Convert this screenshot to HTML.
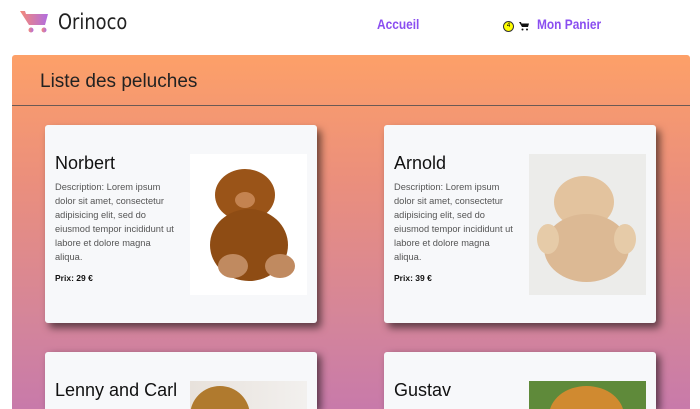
<!DOCTYPE html>
<html><head><meta charset="utf-8"><style>
*{margin:0;padding:0;box-sizing:border-box}
html,body{width:700px;height:409px;overflow:hidden}
body{background:#fff;font-family:"Liberation Sans",sans-serif;position:relative}
.abs{position:absolute}
.panel{left:12px;top:55px;width:678px;height:354px;border-radius:3px 3px 0 0;background:linear-gradient(#fda068 0%,#eb8f7c 35%,#d4859a 75%,#c87aaa 100%)}
.card{position:absolute;width:272px;height:198px;background:#f7f8fa;border-radius:3px;box-shadow:4px 5px 8px rgba(0,0,0,.55);overflow:hidden}
.card.s{height:57px;border-radius:3px 3px 0 0;box-shadow:4px 3px 8px rgba(0,0,0,.55)}
.card h2{position:absolute;left:10px;top:28px;font-size:18px;font-weight:normal;color:#111}
.card p{position:absolute;left:10px;top:55px;width:122px;font-size:9.3px;line-height:14px;color:#555}
.card b{position:absolute;left:10px;top:148px;font-size:8.5px;color:#111}
.img{position:absolute;left:145px;top:29px;width:117px;height:141px;overflow:hidden}
.bl{position:absolute;border-radius:50%}
</style></head><body>
<svg class="abs" style="left:20px;top:10px" width="30" height="24" viewBox="0 0 30 24"><defs><linearGradient id="g" x1="0" x2="1"><stop offset="0" stop-color="#f48a78"/><stop offset="1" stop-color="#b16de0"/></linearGradient></defs><path d="M0 1h5l1 3h22l-3 11H9z" fill="url(#g)"/><circle cx="11" cy="20" r="2.5" fill="url(#g)"/><circle cx="24" cy="20" r="2.5" fill="url(#g)"/></svg>
<div class="abs" style="left:58px;top:10px;font-size:21px;color:#222;font-family:'DejaVu Sans',sans-serif;transform:scaleX(.85);transform-origin:left">Orinoco</div>
<div class="abs" style="left:377px;top:16px;font-size:14px;color:#8a4ef0;font-weight:bold;transform:scaleX(.85);transform-origin:left">Accueil</div>
<div class="abs" style="left:503px;top:21px;width:11px;height:11px;border-radius:50%;background:#ffff00;border:1px solid #333;font-size:6px;text-align:center;line-height:9px">4</div>
<svg class="abs" style="left:519px;top:22px" width="10" height="9" viewBox="0 0 10 9"><path d="M0 0h2l.5 1.5H10L9 5H3z" fill="#111"/><circle cx="3.5" cy="7.5" r="1" fill="#111"/><circle cx="8" cy="7.5" r="1" fill="#111"/></svg>
<div class="abs" style="left:537px;top:16px;font-size:14px;color:#8a4ef0;font-weight:bold;transform:scaleX(.85);transform-origin:left">Mon Panier</div>
<div class="abs panel"></div>
<div class="abs" style="left:40px;top:71px;font-size:19px;color:#222">Liste des peluches</div>
<div class="abs" style="left:12px;top:105px;width:678px;height:1px;background:#6b5a55"></div>

<div class="card" style="left:45px;top:125px"><h2>Norbert</h2><p>Description: Lorem ipsum dolor sit amet, consectetur adipisicing elit, sed do eiusmod tempor incididunt ut labore et dolore magna aliqua.</p><b>Prix: 29 €</b>
<div class="img" style="background:#fff"><div class="bl" style="left:25px;top:15px;width:60px;height:52px;background:#9a5418"></div><div class="bl" style="left:20px;top:55px;width:78px;height:72px;background:#8e4c14"></div><div class="bl" style="left:45px;top:38px;width:20px;height:16px;background:#c48350"></div><div class="bl" style="left:28px;top:100px;width:30px;height:24px;background:#c08a60"></div><div class="bl" style="left:75px;top:100px;width:30px;height:24px;background:#c08a60"></div></div></div>

<div class="card" style="left:384px;top:125px"><h2>Arnold</h2><p>Description: Lorem ipsum dolor sit amet, consectetur adipisicing elit, sed do eiusmod tempor incididunt ut labore et dolore magna aliqua.</p><b>Prix: 39 €</b>
<div class="img" style="background:#ececea"><div class="bl" style="left:25px;top:22px;width:60px;height:52px;background:#e3c39e"></div><div class="bl" style="left:15px;top:60px;width:85px;height:68px;background:#dcb994"></div><div class="bl" style="left:8px;top:70px;width:22px;height:30px;background:#e6cba8"></div><div class="bl" style="left:85px;top:70px;width:22px;height:30px;background:#e6cba8"></div></div></div>

<div class="card s" style="left:45px;top:352px"><h2>Lenny and Carl</h2>
<div class="img" style="background:linear-gradient(90deg,#e8e2dc,#f2f0ee)"><div class="bl" style="left:0;top:5px;width:60px;height:60px;background:#b07a2e"></div></div></div>

<div class="card s" style="left:384px;top:352px"><h2>Gustav</h2>
<div class="img" style="background:#5f8a3a"><div class="bl" style="left:20px;top:5px;width:75px;height:60px;background:#d08a30"></div></div></div>
</body></html>
